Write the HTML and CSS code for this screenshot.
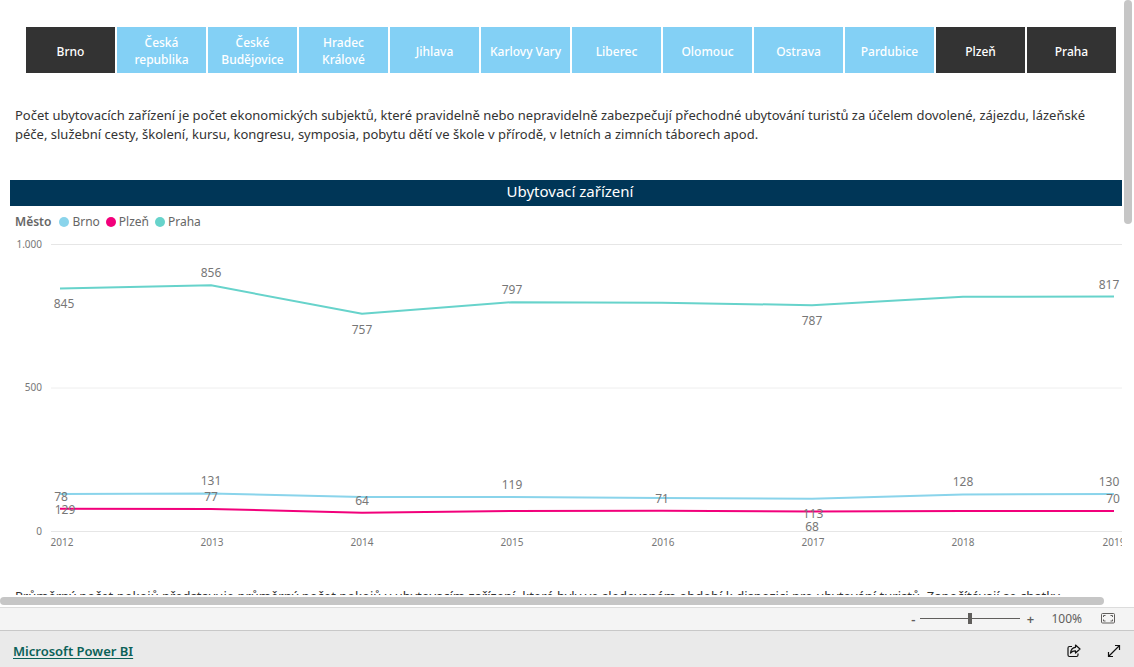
FILE: index.html
```
<!DOCTYPE html>
<html lang="cs">
<head>
<meta charset="utf-8">
<meta name="viewport" content="width=device-width, initial-scale=1">
<title>Ubytovací zařízení</title>
<link rel="stylesheet" href="styles.css">
</head>
<body>
<main class="report">
  <div class="page">
    <div class="slicer" role="group" aria-label="Město">
      <button class="tile selected" type="button" aria-pressed="true">Brno</button>
      <button class="tile" type="button">Česká republika</button>
      <button class="tile" type="button">České Budějovice</button>
      <button class="tile" type="button">Hradec Králové</button>
      <button class="tile" type="button">Jihlava</button>
      <button class="tile" type="button">Karlovy Vary</button>
      <button class="tile" type="button">Liberec</button>
      <button class="tile" type="button">Olomouc</button>
      <button class="tile" type="button">Ostrava</button>
      <button class="tile" type="button">Pardubice</button>
      <button class="tile selected" type="button" aria-pressed="true">Plzeň</button>
      <button class="tile selected" type="button" aria-pressed="true">Praha</button>
    </div>
    <p class="note">Počet ubytovacích zařízení je počet ekonomických subjektů, které pravidelně nebo nepravidelně zabezpečují přechodné ubytování turistů za účelem dovolené, zájezdu, lázeňské péče, služební cesty, školení, kursu, kongresu, symposia, pobytu dětí ve škole v přírodě, v letních a zimních táborech apod.</p>
    <section class="visual">
      <h2 class="visual-title">Ubytovací zařízení</h2>
      <ul class="legend">
        <li class="legend-title">Město</li>
        <li class="legend-item"><span class="dot brno"></span>Brno</li>
        <li class="legend-item"><span class="dot plzen"></span>Plzeň</li>
        <li class="legend-item"><span class="dot praha"></span>Praha</li>
      </ul>
      <svg class="chart" viewBox="0 0 1112 318" role="img" aria-label="Ubytovací zařízení podle roku a města">
        <g class="grid">
          <path d="M41 8.500H1112M41 295.500H1112"/>
          <path class="grid-mid" d="M41 152H1112"/>
        </g>
        <g class="axis axis-y">
          <text x="32" y="12">1.000</text>
          <text x="32" y="155">500</text>
          <text x="32" y="299">0</text>
        </g>
        <g class="axis axis-x">
          <text x="52" y="310">2012</text>
          <text x="202" y="310">2013</text>
          <text x="352" y="310">2014</text>
          <text x="502" y="310">2015</text>
          <text x="653" y="310">2016</text>
          <text x="803" y="310">2017</text>
          <text x="953" y="310">2018</text>
          <text x="1104" y="310">2019</text>
        </g>
        <polyline class="series brno" points="50,258 201,257.500 352,261 502,261 652,262 802,262.700 953,258.400 1104,258"/>
        <polyline class="series plzen" points="50,272.700 201,273 352,276.700 502,275 652,274.700 802,275.600 953,275 1104,275"/>
        <polyline class="series praha" points="50,52.600 201,49.300 352,77.800 502,66.200 652,66.700 802,69.200 953,60.700 1104,60.500"/>
        <g class="values">
          <text x="54" y="72">845</text>
          <text x="201" y="41">856</text>
          <text x="352" y="98">757</text>
          <text x="502" y="58">797</text>
          <text x="802" y="89">787</text>
          <text x="1099" y="53">817</text>
          <text x="51" y="265">78</text>
          <text x="55" y="278">129</text>
          <text x="201" y="249">131</text>
          <text x="201" y="265">77</text>
          <text x="352" y="269">64</text>
          <text x="502" y="253">119</text>
          <text x="652" y="267">71</text>
          <text x="803" y="282">113</text>
          <text x="802" y="295">68</text>
          <text x="953" y="250">128</text>
          <text x="1099" y="250">130</text>
          <text x="1103" y="267">70</text>
        </g>
      </svg>
    </section>
    <p class="note">Průměrný počet pokojů představuje průměrný počet pokojů v ubytovacím zařízení, které byly ve sledovaném období k dispozici pro ubytování turistů. Započítávají se chatky,</p>
  </div>
  <div class="track track-y"><div class="thumb thumb-y"></div></div>
  <div class="track track-x"><div class="thumb thumb-x"></div></div>
</main>
<div class="zoombar">
  <button class="zoom-step" type="button" aria-label="Oddálit">-</button>
  <input class="zoom-range" type="range" min="0" max="200" value="100" aria-label="Lupa">
  <button class="zoom-step" type="button" aria-label="Přiblížit">+</button>
  <span class="zoom-value">100%</span>
  <button class="icon-button" type="button" aria-label="Přizpůsobit stránce">
    <svg width="14" height="11" viewBox="0 0 14 11" fill="none" stroke="#605e5c">
      <rect x=".5" y=".5" width="13" height="9.500" rx="1"/>
      <path d="M2.500 4V2.500H4.500M9.500 2.500H11.500V4M11.500 6.500V8H9.500M4.500 8H2.500V6.500"/>
    </svg>
  </button>
</div>
<footer class="footer">
  <a class="brand" href="#">Microsoft Power BI</a>
  <button class="icon-button" type="button" aria-label="Sdílet">
    <svg width="14" height="14" viewBox="0 0 14 14" fill="none" stroke="#111" stroke-width="1.200" stroke-linejoin="round">
      <path d="M5 2.500H2.500Q1 2.500 1 4V11Q1 12.500 2.500 12.500H9.500Q11 12.500 11 11V9.500"/>
      <path d="M8.500 1L13 5L8.500 9V6.800Q5.500 6.600 3.500 9Q4 3.700 8.500 3.300Z"/>
    </svg>
  </button>
  <button class="icon-button" type="button" aria-label="Celá obrazovka">
    <svg width="14" height="14" viewBox="0 0 14 14" fill="none" stroke="#111" stroke-width="1.200">
      <path d="M1.500 12.500L12.500 1.500M8 1.500H12.500V6M1.500 8V12.500H6"/>
    </svg>
  </button>
</footer>
</body>
</html>
```
FILE: styles.css
```
* { box-sizing: border-box; }

body {
  margin: 0;
  height: 100vh;
  display: flex;
  flex-direction: column;
  background: #fff;
  color: #333;
  font-family: "Noto Sans", "Open Sans", sans-serif;
  font-size: 13px;
}

button {
  border: 0;
  padding: 0;
  background: none;
  font: inherit;
  color: inherit;
}

.report {
  flex: 1;
  min-height: 0;
  display: grid;
  grid-template-columns: minmax(0, 1fr) 12px;
  grid-template-rows: minmax(0, 1fr) 12px;
}

.page { overflow: hidden; }

.slicer {
  display: grid;
  grid-template-columns: repeat(12, minmax(0, 1fr));
  gap: 2px;
  padding: 27px 6px 0 26px;
}

.tile {
  height: 46px;
  padding: 2px 6px 0;
  background: #83d0f5;
  color: #fff;
  font-size: 12px;
  line-height: 17px;
  font-weight: 500;
}

.tile.selected { background: #333; }

.note {
  margin: 0;
  padding: 33px 12px 36px 15px;
  line-height: 19px;
}

.visual { padding-left: 10px; }

.visual-title {
  margin: 0;
  height: 26px;
  padding-left: 8px;
  background: #003657;
  color: #fff;
  font-size: 15px;
  font-weight: 400;
  line-height: 23px;
  text-align: center;
}

.legend {
  display: flex;
  gap: 6px;
  margin: 0;
  padding: 7px 5px 0;
  list-style: none;
  color: #666;
  font-size: 12px;
  line-height: 18px;
}

.legend-title { font-weight: 600; margin-right: 2px; }
.legend-item { display: flex; align-items: center; gap: 3px; }
.dot { width: 10px; height: 10px; border-radius: 50%; }
.dot.brno { background: #8ad4eb; }
.dot.plzen { background: #f2007b; }
.dot.praha { background: #67d3cb; }

.chart {
  display: block;
  width: 100%;
  margin-top: 5px;
  overflow: hidden;
}

.grid path { stroke: #e6e6e6; }
.grid .grid-mid { stroke: #eee; }
.axis { fill: #777; font-size: 10px; }
.axis-y { text-anchor: end; }
.axis-x { text-anchor: middle; }
.values { fill: #777; font-size: 12px; text-anchor: middle; }
.series { fill: none; stroke-width: 2; stroke-linejoin: round; }
.series.brno { stroke: #8ad4eb; }
.series.plzen { stroke: #f2007b; }
.series.praha { stroke: #67d3cb; }

.track-y { grid-column: 2; grid-row: 1; padding: 0 2px; }
.track-x { grid-column: 1 / -1; grid-row: 2; padding: 2px 0; }
.thumb { border-radius: 4px; background: #c6c6c6; }
.thumb-y { height: 224px; }
.thumb-x { width: calc(100% - 30px); height: 8px; }

.zoombar {
  display: flex;
  align-items: center;
  justify-content: flex-end;
  height: 23px;
  padding: 0 19px 1px 0;
  border-top: 1px solid #dcdcdc;
  background: #f4f4f4;
  color: #605e5c;
}

.zoom-step { width: 14px; font-weight: 600; line-height: 20px; }

.zoom-range {
  appearance: none;
  width: 100px;
  height: 12px;
  margin: 0 3px 0 0;
  background: linear-gradient(#605e5c, #605e5c) center / 100% 1px no-repeat;
}

.zoom-range::-webkit-slider-thumb {
  appearance: none;
  width: 4px;
  height: 11px;
  background: #605e5c;
}

.zoom-value { margin: 0 19px 0 14px; font-size: 12px; }
.icon-button { display: flex; }

.footer {
  display: flex;
  align-items: center;
  gap: 26px;
  height: 37px;
  padding: 3px 13px 0;
  border-top: 1px solid #c8c8c8;
  background: #eaeaea;
}

.brand {
  margin-right: auto;
  color: #0b6158;
  font-size: 13px;
  font-weight: 600;
  text-underline-offset: 2px;
}
```
